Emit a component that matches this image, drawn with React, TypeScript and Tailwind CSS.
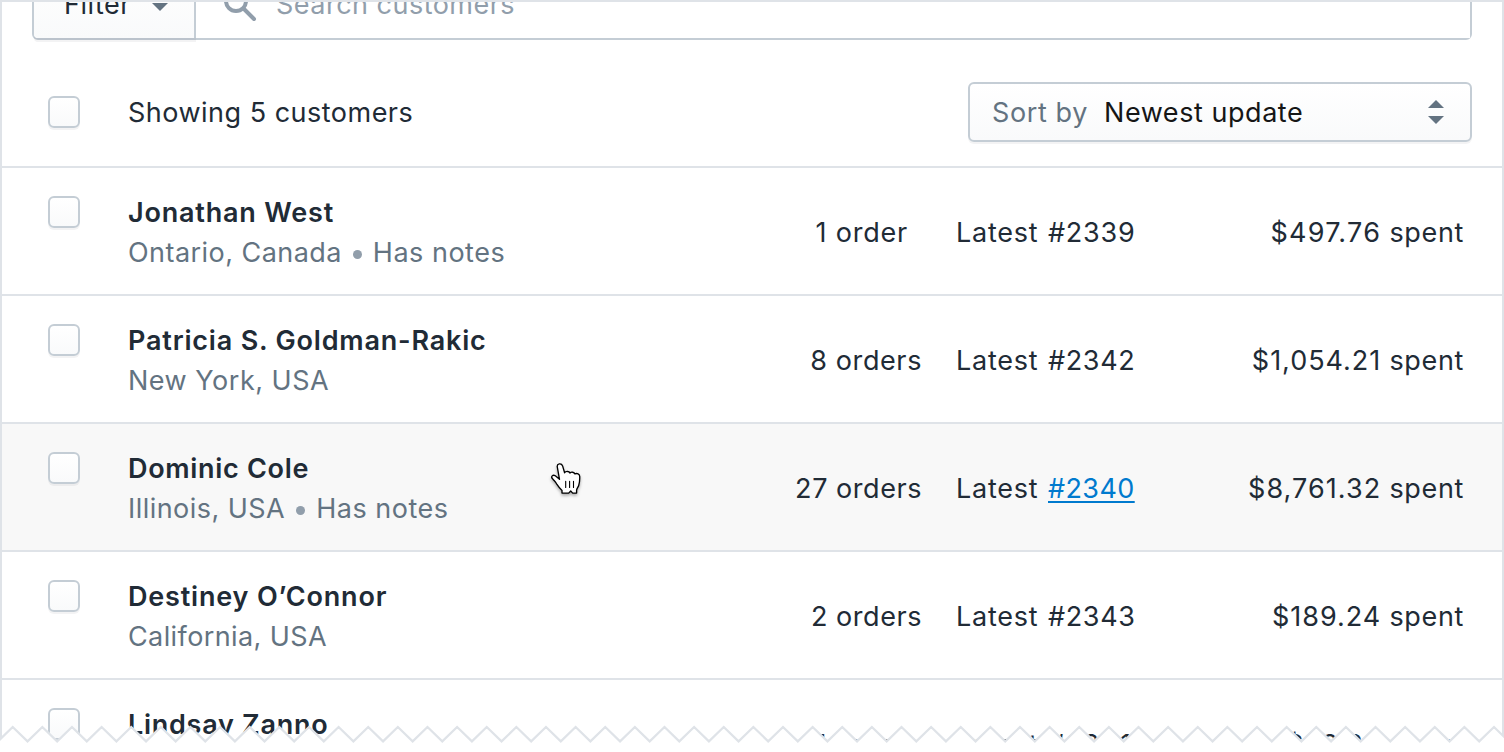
import React from "react";

type Customer = {
  name: string;
  nameTracking: string;
  place: string;
  placeTracking: string;
  notes?: boolean;
  orders: string;
  ordersClass: string;
  latest: string;
  latestTracking: string;
  spent: string;
  spentTracking: string;
  hovered?: boolean;
};

const customers: Customer[] = [
  {
    name: "Jonathan West",
    nameTracking: "tracking-[0.8px]",
    place: "Ontario, Canada",
    placeTracking: "tracking-[0.45px]",
    notes: true,
    orders: "1 order",
    ordersClass: "pr-[14px] tracking-[0.8px]",
    latest: "#2339",
    latestTracking: "tracking-[0.75px]",
    spent: "$497.76",
    spentTracking: "tracking-[1.27px]",
  },
  {
    name: "Patricia S. Goldman-Rakic",
    nameTracking: "tracking-[0.81px]",
    place: "New York, USA",
    placeTracking: "tracking-[0.51px]",
    orders: "8 orders",
    ordersClass: "tracking-[0.6px]",
    latest: "#2342",
    latestTracking: "tracking-[0.65px]",
    spent: "$1,054.21",
    spentTracking: "tracking-[0.97px]",
  },
  {
    name: "Dominic Cole",
    nameTracking: "tracking-[0.69px]",
    place: "Illinois, USA",
    placeTracking: "tracking-[0.46px]",
    notes: true,
    orders: "27 orders",
    ordersClass: "tracking-[0.55px]",
    latest: "#2340",
    latestTracking: "tracking-[0.4px]",
    spent: "$8,761.32",
    spentTracking: "tracking-[1.06px]",
    hovered: true,
  },
  {
    name: "Destiney O’Connor",
    nameTracking: "tracking-[0.82px]",
    place: "California, USA",
    placeTracking: "tracking-[0.4px]",
    orders: "2 orders",
    ordersClass: "tracking-[0.55px]",
    latest: "#2343",
    latestTracking: "tracking-[0.65px]",
    spent: "$189.24",
    spentTracking: "tracking-[0.98px]",
  },
  {
    name: "Lindsay Zanno",
    nameTracking: "tracking-[0.73px]",
    place: "Utah, USA",
    placeTracking: "tracking-[0.5px]",
    orders: "1 order",
    ordersClass: "pr-[14px] tracking-[0.8px]",
    latest: "#2341",
    latestTracking: "tabular-nums tracking-[0.1px]",
    spent: "$28.32",
    spentTracking: "tracking-[0.84px]",
  },
];

function Checkbox() {
  return (
    <span className="block size-8 shrink-0 rounded-[6px] border-2 border-[#c4cdd5] bg-linear-to-b from-white to-[#f9fafb] shadow-[0_2px_0_rgba(22,29,37,0.05)]" />
  );
}

function CustomerRow({ c }: { c: Customer }) {
  return (
    <li
      className={`flex h-32 shrink-0 border-b-2 border-[#dfe3e8] pl-[46px] pr-[38px] ${c.hovered ? "bg-[#f8f8f8]" : "bg-white"}`}
    >
      <div className="pt-7">
        <Checkbox />
      </div>
      <div className="ml-12 flex-1 pt-[25px]">
        <div className={`font-semibold ${c.nameTracking}`}>{c.name}</div>
        <div className="flex items-center text-[#637381]">
          <span className={c.placeTracking}>{c.place}</span>
          {c.notes && (
            <>
              <span className="mt-[3px] ml-[11px] size-[9px] rounded-full bg-[#919eab]" />
              <span className="ml-[11px] tracking-[0.5px]">Has notes</span>
            </>
          )}
        </div>
      </div>
      <div className={`w-[160px] shrink-0 pt-[45px] text-right whitespace-nowrap ${c.ordersClass}`}>{c.orders}</div>
      <div className="flex w-[212px] shrink-0 pt-[45px] pl-[34px]">
        <span className="w-[92px] shrink-0 tracking-[0.75px]">Latest</span>
        <span
          className={`${c.latestTracking} ${c.hovered ? "text-[#007ace] underline decoration-2 underline-offset-[3px] [text-decoration-skip-ink:none]" : ""}`}
        >
          {c.latest}
        </span>
      </div>
      <div className="w-[330px] shrink-0 pt-[45px] text-right">
        <span className={c.spentTracking}>{c.spent}</span>
        <span className="tracking-[0.65px]"> spent</span>
      </div>
    </li>
  );
}

function Header() {
  return (
    <div className="flex h-32 shrink-0 items-start border-b-2 border-[#dfe3e8] pl-[46px] pr-[30px] pt-[42px]">
      <div className="pt-[14px]">
        <Checkbox />
      </div>
      <div className="ml-12 flex-1 pt-[11px] tracking-[0.49px]">Showing 5 customers</div>
      <div className="flex h-[60px] w-[504px] items-center rounded-[6px] border-2 border-[#c4cdd5] bg-linear-to-b from-white to-[#f9fafb] pr-[26px] pl-[22px] shadow-[0_2px_0_rgba(22,29,37,0.05)]">
        <span className="w-[112px] pt-0.5 tracking-[0.6px] text-[#637381]">Sort by</span>
        <span className="flex-1 pt-0.5 tracking-[0.55px] text-[#161616]">Newest update</span>
        <svg width="16" height="24" viewBox="0 0 16 24" fill="#637381">
          <path d="M0 8 8 0l8 8zM0 16h16l-8 8z" />
        </svg>
      </div>
    </div>
  );
}

function Toolbar() {
  return (
    <div className="flex h-[38px] shrink-0 items-end px-[30px]">
      <div className="flex h-[72px] flex-1 rounded-[6px] border-2 border-[#c4cdd5]">
        <div className="flex w-[162px] items-center rounded-bl-[4px] border-r-2 border-[#c4cdd5] bg-linear-to-b from-white to-[#f9fafb] pt-0.5 pl-[30px] shadow-[0_4px_0_0_rgba(22,29,37,0.05)] [clip-path:inset(0_0_-4px_0)]">
          <span className="w-[88px] tracking-[0.5px]">Filter</span>
          <svg width="16" height="8" viewBox="0 0 16 8" className="mt-1 fill-[#637381]">
            <path d="M0 0h16L8 8z" />
          </svg>
        </div>
        <div className="flex flex-1 items-center bg-white pt-0.5 pl-7 text-[#919eab]">
          <svg width="34" height="34" viewBox="0 0 34 34" fill="none" stroke="currentColor" strokeWidth="4" strokeLinecap="round">
            <circle cx="12" cy="13" r="10" />
            <path d="m20 21 10 10" />
          </svg>
          <span className="ml-[18px] tracking-[0.48px]">Search customers</span>
        </div>
      </div>
    </div>
  );
}

function TornEdge() {
  const step = 14.813;
  const points = Array.from({ length: 104 }, (_, i) => `${(-2.1 + i * step).toFixed(2)},${i % 2 ? 15 : 29.4}`).join(" ");
  return (
    <svg className="absolute bottom-0 left-0" width="1504" height="40" viewBox="0 0 1504 40">
      <polygon points={`${points} 1530,60 -10,60`} fill="white" />
      <polyline points={points} fill="none" stroke="#dfe3e8" strokeWidth="2.2" />
    </svg>
  );
}

function HandCursor() {
  return (
    <svg className="absolute top-[462px] left-[550px] drop-shadow-[0_2px_1.5px_rgba(0,0,0,0.3)]" width="34" height="36" viewBox="0 0 34 36">
      <path
        d="M7.3 5C6.7 1.4 11.4.8 12.6 3.9l2 6.8c1.3-1.9 4.7-1.5 5.3.3 1.4-1.4 4.3-1 5 .9 2.2-1 4.7-.1 4.8 2.3.2 3.4-.1 6.3-1 9.3-.5 1.6-2 3.1-2.1 4.8v2.8h-3.9l-2-2.1-2 2.1H12v-2.5c-1.9-1.9-3.7-4.3-5.4-6.8-1-2.1-2.4-3.4-4-5C.4 14.6 2.9 12.2 5.3 13.8l4.2 3.5z"
        fill="white"
        stroke="black"
        strokeWidth="1.35"
        strokeLinejoin="round"
      />
      <path d="M15.7 19.2v6.3M19.6 19.2v6.3M23.5 19.2v6.3" stroke="black" strokeWidth="1.1" strokeLinecap="round" />
    </svg>
  );
}

export default function App() {
  return (
    <div className="relative h-[752px] w-[1504px] overflow-hidden bg-white font-['Inter',sans-serif] text-[27px] leading-10 text-[#212b36]">
      <div className="flex h-full flex-col overflow-hidden border-x-2 border-t-2 border-[#dfe3e8]">
        <Toolbar />
        <Header />
        <ul className="flex flex-col">
          {customers.map((c) => (
            <CustomerRow key={c.name} c={c} />
          ))}
        </ul>
      </div>
      <TornEdge />
      <HandCursor />
    </div>
  );
}
